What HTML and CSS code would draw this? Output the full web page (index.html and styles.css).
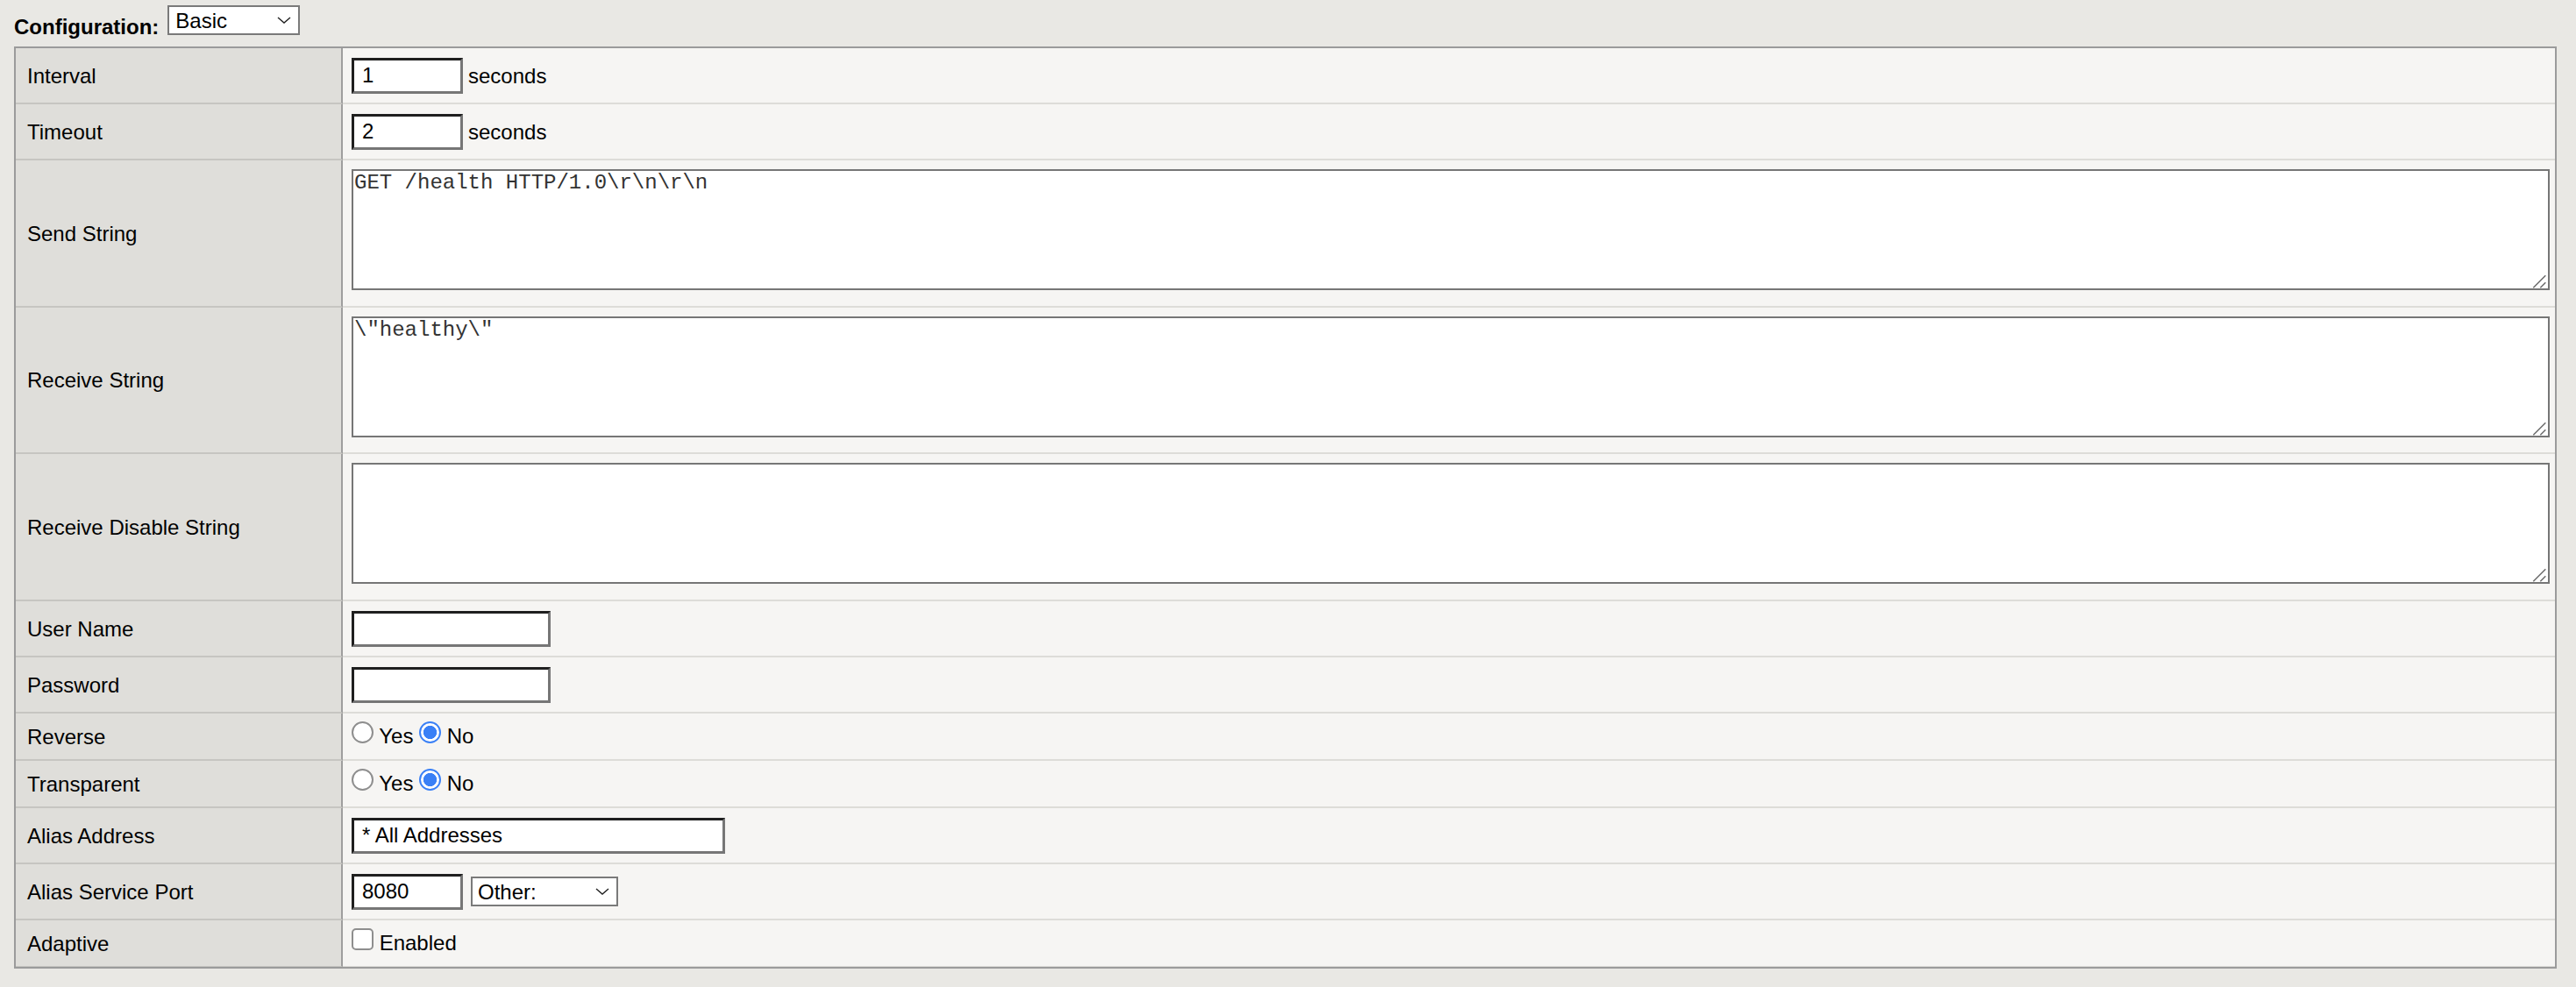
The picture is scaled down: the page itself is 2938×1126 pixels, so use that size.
FILE: index.html
```html
<!DOCTYPE html>
<html lang="en">
<head>
<meta charset="utf-8">
<title>Monitor Configuration</title>
<link rel="stylesheet" href="styles.css">
</head>
<body>
<div class="page">
  <div class="config-bar">
    <span class="config-label">Configuration:</span>
    <span class="select-wrap select-config">
      <select class="select"><option>Basic</option><option>Advanced</option></select>
      <svg class="chev" viewBox="0 0 16 8" aria-hidden="true"><polyline points="1,1 8,7 15,1" fill="none" stroke="#222" stroke-width="1.4"/></svg>
    </span>
  </div>

  <div class="props">
    <div class="lbl">Interval</div>
    <div class="val"><input class="text w-short" type="text" value="1"><span class="unit">seconds</span></div>

    <div class="lbl">Timeout</div>
    <div class="val"><input class="text w-short" type="text" value="2"><span class="unit">seconds</span></div>

    <div class="lbl">Send String</div>
    <div class="val val-area"><div class="ta-wrap"><textarea class="area">GET /health HTTP/1.0\r\n\r\n</textarea><svg class="grip" viewBox="0 0 16 16" aria-hidden="true"><line x1="1.3" y1="15.3" x2="15.3" y2="1.3"/><line x1="9.3" y1="15.3" x2="15.3" y2="9.3"/></svg></div></div>

    <div class="lbl">Receive String</div>
    <div class="val val-area"><div class="ta-wrap"><textarea class="area">\"healthy\"</textarea><svg class="grip" viewBox="0 0 16 16" aria-hidden="true"><line x1="1.3" y1="15.3" x2="15.3" y2="1.3"/><line x1="9.3" y1="15.3" x2="15.3" y2="9.3"/></svg></div></div>

    <div class="lbl">Receive Disable String</div>
    <div class="val val-area"><div class="ta-wrap"><textarea class="area"></textarea><svg class="grip" viewBox="0 0 16 16" aria-hidden="true"><line x1="1.3" y1="15.3" x2="15.3" y2="1.3"/><line x1="9.3" y1="15.3" x2="15.3" y2="9.3"/></svg></div></div>

    <div class="lbl">User Name</div>
    <div class="val"><input class="text w-mid" type="text" value=""></div>

    <div class="lbl">Password</div>
    <div class="val"><input class="text w-mid" type="password" value=""></div>

    <div class="lbl">Reverse</div>
    <div class="val val-top"><div class="choice"><input class="radio" type="radio" name="reverse"> Yes <input class="radio" type="radio" name="reverse" checked> No</div></div>

    <div class="lbl">Transparent</div>
    <div class="val val-top"><div class="choice"><input class="radio" type="radio" name="transparent"> Yes <input class="radio" type="radio" name="transparent" checked> No</div></div>

    <div class="lbl">Alias Address</div>
    <div class="val"><input class="text w-long" type="text" value="* All Addresses"></div>

    <div class="lbl">Alias Service Port</div>
    <div class="val val-port"><input class="text w-short" type="text" value="8080">
      <span class="select-wrap select-port">
        <select class="select"><option>Other:</option><option>HTTP</option><option>HTTPS</option></select>
        <svg class="chev" viewBox="0 0 16 8" aria-hidden="true"><polyline points="1,1 8,7 15,1" fill="none" stroke="#222" stroke-width="1.4"/></svg>
      </span>
    </div>

    <div class="lbl last">Adaptive</div>
    <div class="val val-top last"><div class="choice"><input class="check" type="checkbox"> Enabled</div></div>
  </div>
</div>
</body>
</html>
```

FILE: styles.css
```css
html, body {
  margin: 0;
  padding: 0;
}

body {
  background: #e9e8e4;
  font-family: "Liberation Sans", Arial, sans-serif;
  font-size: 24px;
  line-height: 27px;
  color: #000;
}

.page {
  padding: 6px 22px 0 16px;
}

/* Configuration header */
.config-bar {
  display: flex;
  align-items: flex-start;
  height: 34px;
  margin-bottom: 13px;
}

.config-label {
  font-size: 24px;
  line-height: 27px;
  font-weight: bold;
  margin-top: 11px;
  margin-right: 10px;
}

.select-wrap {
  position: relative;
  display: inline-block;
}

.select {
  appearance: none;
  -webkit-appearance: none;
  box-sizing: border-box;
  height: 34px;
  margin: 0;
  padding: 0 7px;
  border: 2px solid #7a7a7a;
  border-radius: 0;
  background: #fff;
  color: #000;
  font-family: "Liberation Sans", Arial, sans-serif;
  font-size: 24px;
  line-height: 27px;
}

.select-config .select {
  width: 151px;
}

.select-port .select {
  width: 168px;
  padding: 0 6px;
}

.chev {
  position: absolute;
  top: 13px;
  right: 10px;
  width: 16px;
  height: 8px;
  pointer-events: none;
}

/* Property grid */
.props {
  display: grid;
  grid-template-columns: 373px 1fr;
  grid-template-rows: 64px 64px 168px 167px 168px 64px 64px 54px 54px 64px 64px 53px;
  border: 2px solid #9b9b9b;
}

.lbl {
  box-sizing: border-box;
  display: flex;
  align-items: center;
  padding-left: 13px;
  background: #dfdeda;
  border-right: 2px solid #9e9e9e;
  border-bottom: 2px solid #c6c5c1;
}

.val {
  box-sizing: border-box;
  display: flex;
  align-items: center;
  gap: 6px;
  padding: 0 6px 0 10px;
  background: #f6f5f3;
  border-bottom: 2px solid #dddcd8;
}

.lbl.last,
.val.last {
  border-bottom-width: 1px;
}

.val-area {
  align-items: flex-start;
  padding-top: 10px;
}

.val-top {
  display: block;
  padding-top: 9px;
}

.val-port {
  gap: 9px;
}

/* Text inputs */
.text {
  box-sizing: border-box;
  height: 41px;
  margin: 0;
  padding: 0 4px 0 9px;
  border-style: solid;
  border-width: 3px;
  border-color: #1f1f1f #767676 #767676 #1f1f1f;
  border-radius: 0;
  background: #fff;
  color: #000;
  font-family: "Liberation Sans", Arial, sans-serif;
  font-size: 24px;
  outline: none;
}

.w-short {
  width: 127px;
}

.w-mid {
  width: 227px;
}

.w-long {
  width: 426px;
}

.unit {
  white-space: nowrap;
}

/* Textareas */
.ta-wrap {
  position: relative;
  flex: 1;
  height: 138px;
}

.area {
  display: block;
  box-sizing: border-box;
  width: 100%;
  height: 100%;
  margin: 0;
  padding: 0 1px;
  border: 2px solid #767676;
  border-radius: 0;
  background: #fff;
  color: #333;
  font-family: "Liberation Mono", "Courier New", monospace;
  font-size: 24px;
  line-height: 27.6px;
  resize: none;
  outline: none;
}

.grip {
  position: absolute;
  right: 4px;
  bottom: 2px;
  width: 16px;
  height: 16px;
  pointer-events: none;
}

.grip line {
  stroke: #6f6f6f;
  stroke-width: 1.6;
}

/* Radios and checkbox */
.choice {
  white-space: nowrap;
}

.radio,
.check {
  appearance: none;
  -webkit-appearance: none;
  box-sizing: border-box;
  display: inline-block;
  width: 25px;
  height: 25px;
  margin: 0;
  vertical-align: baseline;
  background: #fff;
}

.radio {
  border: 2px solid #8e8e8e;
  border-radius: 50%;
}

.radio:checked {
  border: 2px solid #3a80f6;
  background: radial-gradient(circle, #3a80f6 0 7.3px, #fff 7.9px);
}

.check {
  border: 2px solid #8e8e8e;
  border-radius: 5px;
}
```
